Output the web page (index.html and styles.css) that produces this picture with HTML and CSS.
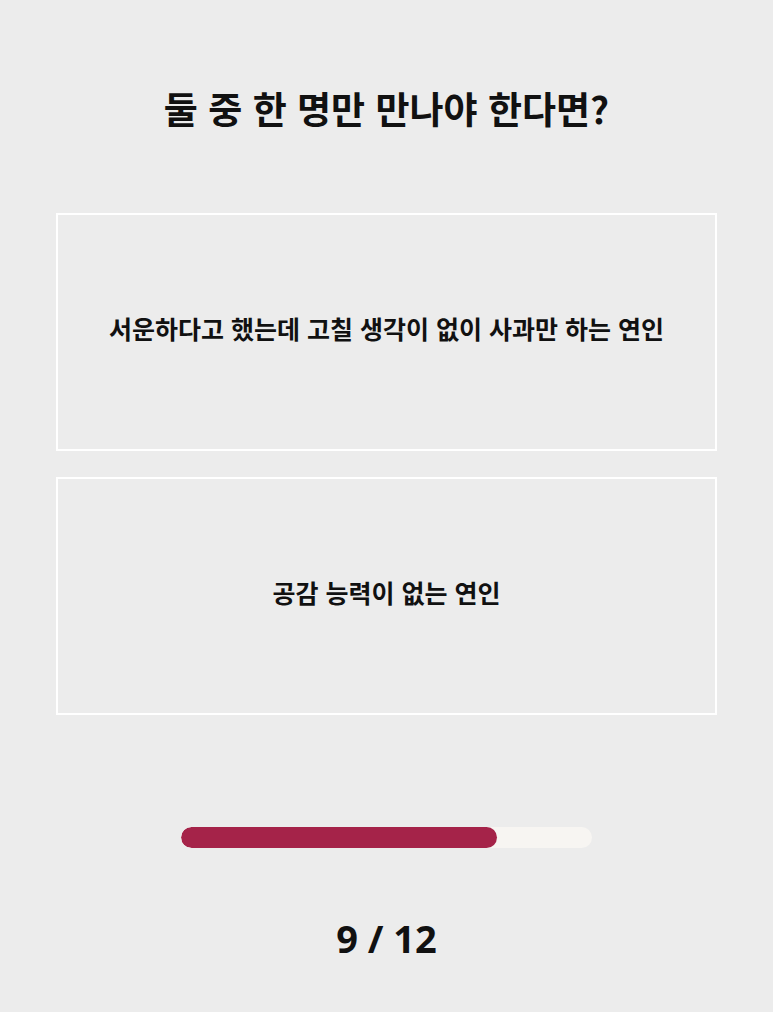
FILE: index.html
```html
<!DOCTYPE html>
<html lang="ko">
<head>
  <meta charset="UTF-8">
  <meta name="viewport" content="width=device-width, initial-scale=1.0">
  <title>연애 밸런스 게임</title>
  <link rel="stylesheet" href="styles.css">
</head>
<body>
  <div class="quiz">
    <h1 class="question">둘 중 한 명만 만나야 한다면?</h1>

    <div class="choices">
      <button class="choice" type="button">서운하다고 했는데 고칠 생각이 없이 사과만 하는 연인</button>
      <button class="choice" type="button">공감 능력이 없는 연인</button>
    </div>

    <div class="progress">
      <div class="progress-fill" style="width: 77%;"></div>
    </div>

    <p class="counter">9 / 12</p>
  </div>
</body>
</html>
```

FILE: styles.css
```css
html,
body {
  height: 100%;
}

body {
  margin: 0;
  background-color: #ececec;
  font-family: "Noto Sans CJK KR", "Noto Sans", sans-serif;
  color: #111;
}

.quiz {
  display: flex;
  flex-direction: column;
  align-items: center;
  padding: 0 56px;
}

/* Question title */
.question {
  margin: 78px 0 0;
  font-size: 37px;
  font-weight: 700;
  line-height: 60px;
}

/* Answer cards */
.choices {
  width: 100%;
  display: flex;
  flex-direction: column;
  gap: 26px;
  margin-top: 75px;
}

.choice {
  width: 100%;
  height: 238px;
  margin: 0;
  padding: 0 20px 8px;
  background: transparent;
  border: 2px solid #fff;
  font-family: inherit;
  font-size: 25px;
  font-weight: 700;
  color: #111;
  cursor: pointer;
}

.choice:hover {
  background-color: #f2f2f2;
}

/* Progress bar */
.progress {
  width: 411px;
  height: 21px;
  margin-top: 112px;
  border-radius: 11px;
  background-color: #f7f5f2;
  overflow: hidden;
}

.progress-fill {
  height: 100%;
  border-radius: 11px;
  background-color: #a52349;
}

.counter {
  margin: 60px 0 0;
  font-family: "Open Sans", "Noto Sans", sans-serif;
  font-size: 38px;
  font-weight: 700;
  line-height: 60px;
}
```
